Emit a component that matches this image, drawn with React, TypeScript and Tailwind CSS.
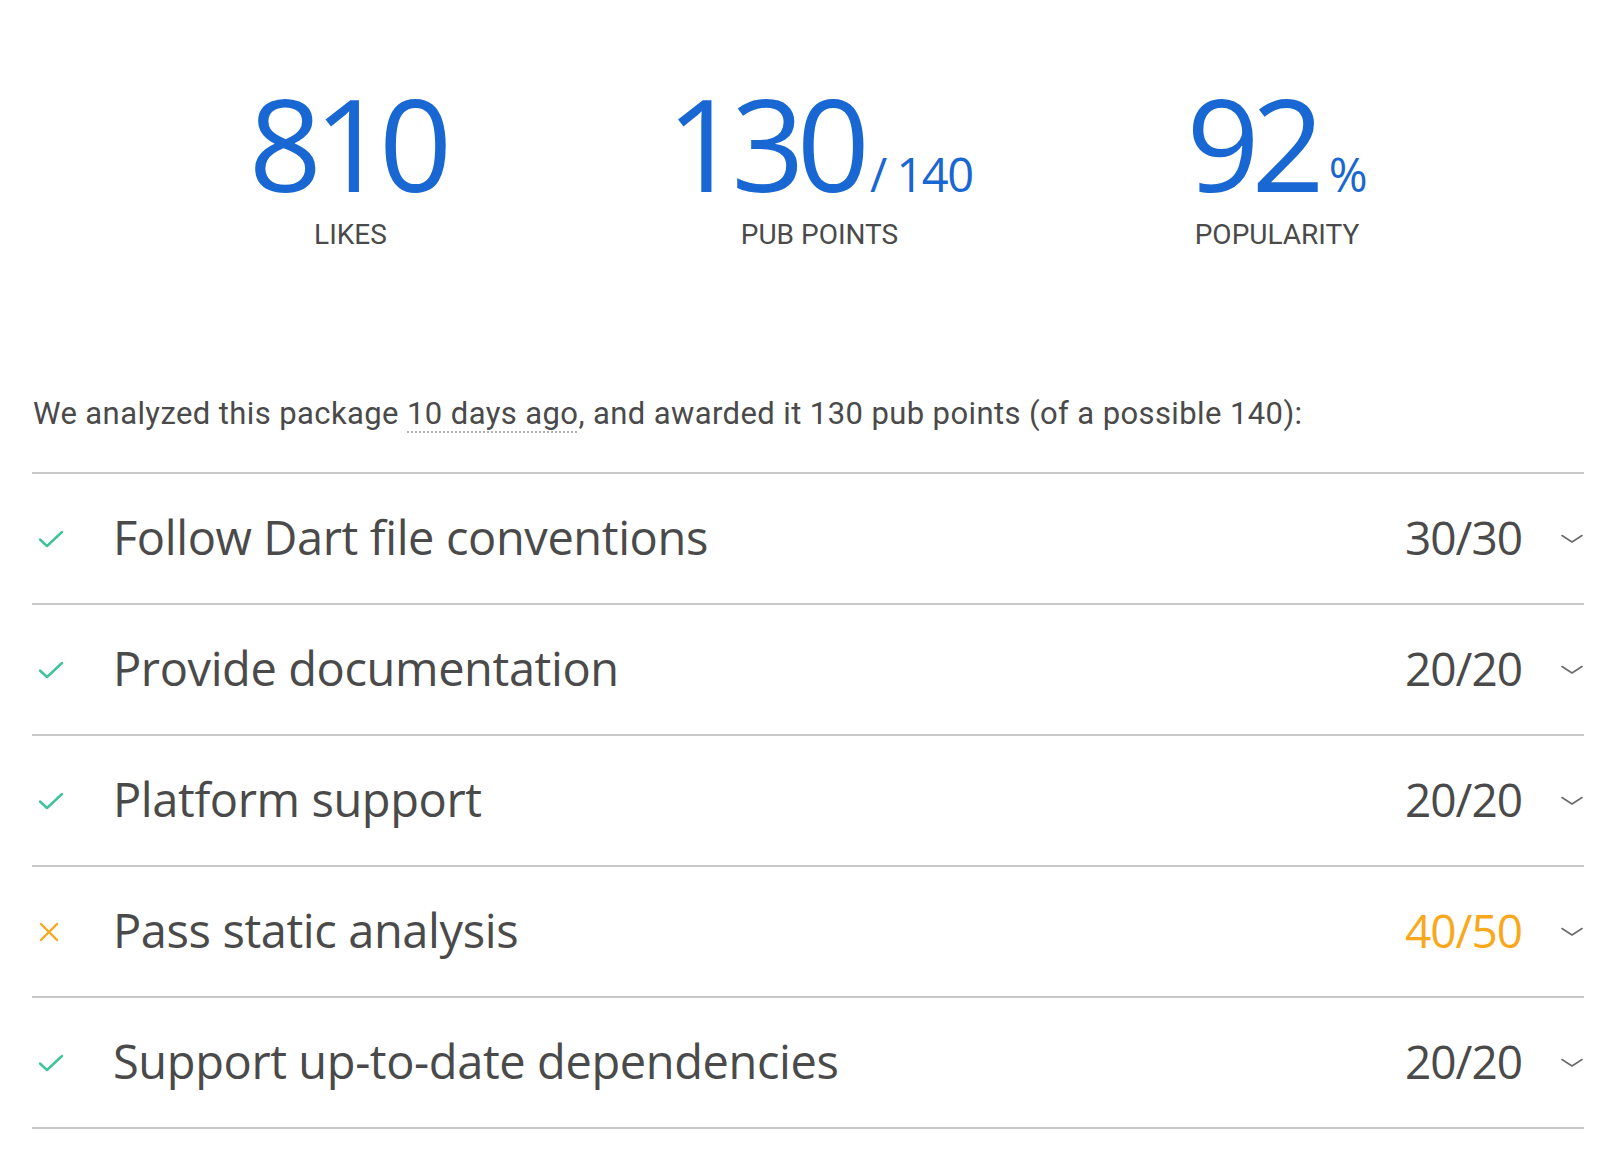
import React from "react";

const rows = [
  { title: "Follow Dart file conventions", score: "30/30", ok: true },
  { title: "Provide documentation", score: "20/20", ok: true },
  { title: "Platform support", score: "20/20", ok: true },
  { title: "Pass static analysis", score: "40/50", ok: false },
  { title: "Support up-to-date dependencies", score: "20/20", ok: true },
];

const GS = { fontFamily: '"Open Sans", "Noto Sans", sans-serif' } as React.CSSProperties;

function Check() {
  return (
    <svg width="26" height="20" viewBox="0 0 26 20" fill="none">
      <path d="M2 10.5 L9 17 L24 3" stroke="#3ec39a" strokeWidth="2.4" strokeLinecap="round" strokeLinejoin="round" />
    </svg>
  );
}

function Cross() {
  return (
    <svg width="22" height="22" viewBox="0 0 22 22" fill="none">
      <path d="M3 3 L19 19 M19 3 L3 19" stroke="#f9a81b" strokeWidth="2.4" strokeLinecap="round" />
    </svg>
  );
}

function Chevron() {
  return (
    <svg width="22" height="10" viewBox="0 0 22 10" fill="none">
      <path d="M1 1.5 L11 8 L21 1.5" stroke="#6b6b6b" strokeWidth="1.6" strokeLinecap="round" strokeLinejoin="round" />
    </svg>
  );
}

export default function App() {
  return (
    <div className="w-[1610px] h-[1160px] bg-white pl-[32px] pr-[26px] overflow-hidden" style={{ fontFamily: "Roboto, sans-serif" }}>
      <div className="flex pt-[73px]">
        <div className="w-[469px] ml-[84px] flex flex-col items-center">
          <div className="text-[128px] leading-[140px] text-[#1967d2] tracking-[-8px] pr-[8px]" style={GS}>810</div>
          <div className="text-[28px] leading-[36px] text-[#4a4a4a] mt-[4px]">LIKES</div>
        </div>
        <div className="w-[469px] flex flex-col items-center">
          <div className="flex items-baseline text-[#1967d2]" style={GS}>
            <span className="text-[128px] leading-[140px] tracking-[-8px]">130</span>
            <span className="text-[47px] leading-[56px] ml-[8px] tracking-[-1.5px]">/ 140</span>
          </div>
          <div className="text-[28px] leading-[36px] text-[#4a4a4a] mt-[4px]">PUB POINTS</div>
        </div>
        <div className="w-[446px] flex flex-col items-center">
          <div className="flex items-baseline text-[#1967d2]" style={GS}>
            <span className="text-[128px] leading-[140px] tracking-[-8px]">92</span>
            <span className="text-[47px] leading-[56px] ml-[12px]">%</span>
          </div>
          <div className="text-[28px] leading-[36px] text-[#4a4a4a] mt-[4px]">POPULARITY</div>
        </div>
      </div>

      <p className="mt-[141px] text-[31px] leading-[40px] text-[#4a4a4a] pl-[1px] tracking-[0.4px]">
        We analyzed this package{" "}
        <span className="underline decoration-dotted decoration-[#b0b0b0] underline-offset-[7px] decoration-2">10 days ago</span>
        , and awarded it 130 pub points (of a possible 140):
      </p>

      <div className="mt-[38px] border-t-2 border-[#c8c8c8]">
        {rows.map((r) => (
          <div key={r.title} className="h-[131px] border-b-2 border-[#c8c8c8] flex items-center">
            <div className="w-[81px] flex items-center pl-[6px]">{r.ok ? <Check /> : <Cross />}</div>
            <div className="flex-1 text-[47px] tracking-[-0.4px] text-[#4a4a4a] mt-[-2px]" style={GS}>{r.title}</div>
            <div className={`text-[46px] tracking-[-1px] mt-[-2px] ${r.ok ? "text-[#4a4a4a]" : "text-[#f9a81b]"}`} style={GS}>{r.score}</div>
            <div className="w-[62px] flex justify-end pr-[1px]"><Chevron /></div>
          </div>
        ))}
      </div>
    </div>
  );
}
